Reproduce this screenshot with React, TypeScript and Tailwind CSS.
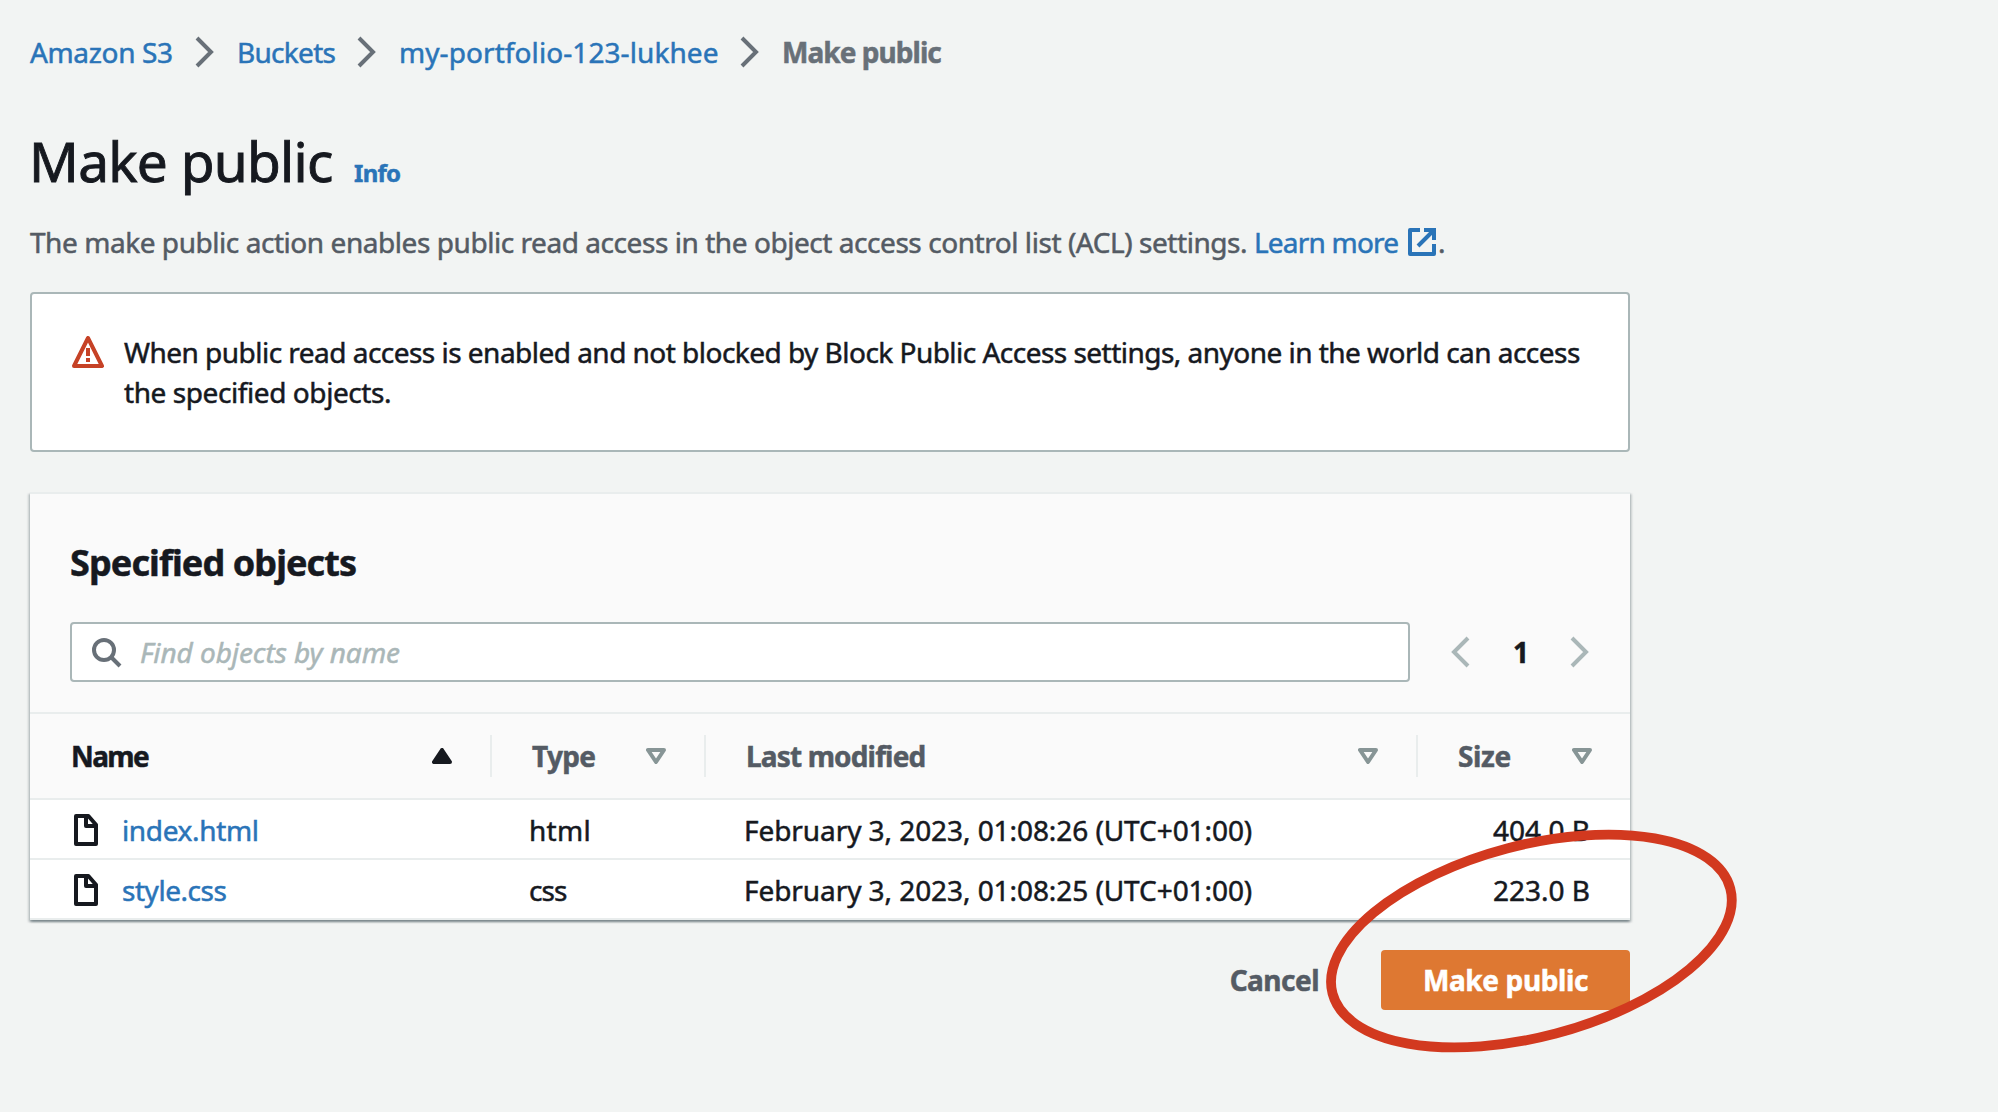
import type { ReactNode } from "react";

function Chevron({ flip = false, className = "" }: { flip?: boolean; className?: string }) {
  return (
    <svg viewBox="0 0 16 16" className={`size-8 shrink-0 ${className}`} fill="none" stroke="currentColor" strokeWidth="2">
      <path d={flip ? "M11 1 4 8l7 7" : "m4 1 7 7-7 7"} />
    </svg>
  );
}

function ExternalIcon() {
  return (
    <svg viewBox="0 0 16 16" className="size-8 shrink-0 text-[#2a74b8]" fill="none" stroke="currentColor" strokeWidth="2">
      <path d="M14 2 6 10M7 2H2v12h12V9" strokeLinejoin="round" />
      <path d="M9 2h5v5" />
    </svg>
  );
}

function WarningIcon() {
  return (
    <svg viewBox="0 0 16 16" className="mt-1 size-8 shrink-0 text-[#c64226]" fill="none" stroke="currentColor" strokeWidth="2">
      <path d="m8 1 7 14H1z" strokeLinejoin="round" />
      <path d="M8 6v4M8 11v2" />
    </svg>
  );
}

function SearchIcon() {
  return (
    <svg viewBox="0 0 16 16" className="size-8 shrink-0 text-[#687078]" fill="none" stroke="currentColor" strokeWidth="2">
      <circle cx="7" cy="7" r="5" />
      <path d="m15 15-4.5-4.5" />
    </svg>
  );
}

function FileIcon() {
  return (
    <svg viewBox="0 0 16 16" className="size-8 shrink-0 text-[#16191f]" fill="none" stroke="currentColor" strokeWidth="2" strokeLinejoin="round">
      <path d="M3 1h6.2L13 5.4V15H3z" />
      <path d="M8 1v5h5" />
    </svg>
  );
}

function SortIcon({ active = false }: { active?: boolean }) {
  return (
    <svg
      viewBox="0 0 20 16"
      className={`h-4 w-5 shrink-0 ${active ? "text-[#16191f]" : "text-[#879596]"}`}
      stroke="currentColor"
      strokeWidth="4"
      strokeLinejoin="round"
      fill={active ? "currentColor" : "none"}
    >
      <path d={active ? "M2 14h16L10 2z" : "M2 2h16l-8 12z"} />
    </svg>
  );
}

function HeaderCell({ children, active = false, divider = true, className = "" }: { children: ReactNode; active?: boolean; divider?: boolean; className?: string }) {
  return (
    <div className={`flex h-[42px] items-center justify-between font-bold ${divider ? "border-r-2 border-[#e9eded]" : ""} ${active ? "text-[#16191f]" : "text-[#545b64]"} ${className}`}>
      {children}
      <SortIcon active={active} />
    </div>
  );
}

const COLUMNS = "grid grid-cols-[462px_214px_712px_212px] items-center";

const FILES = [
  { name: "index.html", type: "html", modified: "February 3, 2023, 01:08:26 (UTC+01:00)", size: "404.0 B", nameSpacing: "tracking-[-0.35px]", typeSpacing: "tracking-[0.3px]" },
  { name: "style.css", type: "css", modified: "February 3, 2023, 01:08:25 (UTC+01:00)", size: "223.0 B", nameSpacing: "tracking-[-0.45px]", typeSpacing: "tracking-[-0.9px]" },
];

export default function App() {
  return (
    <div className="relative h-[1112px] w-[1998px] overflow-hidden bg-[#f2f4f3] pt-8 pl-[30px] font-['Noto_Sans',sans-serif] text-[28px] leading-10 whitespace-nowrap text-[#16191f] [-webkit-text-stroke:0.5px]">
      <div className="w-[1600px]">
        <nav className="flex h-10 items-center text-[#687078]">
          <a className="w-[159px] tracking-[-0.35px] text-[#2a74b8]">Amazon S3</a>
          <Chevron />
          <a className="ml-4 w-[114px] tracking-[-0.7px] text-[#2a74b8]">Buckets</a>
          <Chevron />
          <a className="ml-4 w-[335px] tracking-[0.08px] text-[#2a74b8]">my-portfolio-123-lukhee</a>
          <Chevron />
          <span className="ml-4 font-bold tracking-[-0.95px]">Make public</span>
        </nav>

        <header className="mt-[57px] flex h-16 items-baseline">
          <h1 className="-ml-px w-[325px] text-[55px] leading-16 tracking-[-0.75px] [-webkit-text-stroke:0.9px]">Make public</h1>
          <a className="text-2xl font-bold tracking-[-0.7px] text-[#2a74b8]">Info</a>
        </header>

        <p className="mt-[29px] flex h-10 items-center text-[#545b64]">
          <span className="w-[1224px] tracking-[-0.444px]">
            The make public action enables public read access in the object access control list (ACL) settings.
          </span>
          <a className="flex w-[184px] items-center justify-between text-[#2a74b8]">
            <span className="tracking-[-0.8px]">Learn more</span>
            <ExternalIcon />
          </a>
          <span>.</span>
        </p>

        <section className="mt-[30px] flex h-40 gap-5 rounded-sm border-2 border-[#aab7b8] bg-white pt-[38px] pl-10">
          <WarningIcon />
          <p>
            <span className="tracking-[-0.526px]">
              When public read access is enabled and not blocked by Block Public Access settings, anyone in the world can access
            </span>
            <br />
            <span className="tracking-[-0.42px]">the specified objects.</span>
          </p>
        </section>

        <section className="mt-10 border-t-2 border-[#e9eded] bg-[#fafafa] shadow-[0_2px_2px_0_rgba(0,28,36,0.3),2px_2px_2px_0_rgba(0,28,36,0.15),-2px_2px_2px_0_rgba(0,28,36,0.15)]">
          <div className="h-[218px] pt-[47px] pl-10">
            <h2 className="text-4xl leading-11 font-bold tracking-[-0.9px]">Specified objects</h2>
            <div className="mt-[37px] flex h-[60px] items-center">
              <div className="flex h-full w-[1340px] shrink-0 items-center gap-[18px] rounded-sm border-2 border-[#aab7b8] bg-white pl-[18px]">
                <SearchIcon />
                <span className="tracking-[-0.07px] text-[#aab7b8] italic">Find objects by name</span>
              </div>
              <Chevron flip className="ml-9 text-[#aab7b8]" />
              <span className="w-[86px] text-center font-bold">1</span>
              <Chevron className="text-[#aab7b8]" />
            </div>
          </div>

          <div className={`${COLUMNS} h-[88px] border-y-2 border-[#e9eded]`}>
            <HeaderCell active className="pr-[38px] pl-[41px]">
              <span className="tracking-[-1.6px]">Name</span>
            </HeaderCell>
            <HeaderCell className="pr-[38px] pl-10">
              <span className="tracking-[-0.7px]">Type</span>
            </HeaderCell>
            <HeaderCell className="pr-[38px] pl-10">
              <span className="tracking-[-0.85px]">Last modified</span>
            </HeaderCell>
            <HeaderCell divider={false} className="pr-[38px] pl-10">
              <span className="tracking-[-0.4px]">Size</span>
            </HeaderCell>
          </div>

          {FILES.map((file) => (
            <div key={file.name} className={`${COLUMNS} h-[60px] border-b-2 border-[#e9eded] bg-white pt-0.5`}>
              <div className="flex items-center gap-5 pl-10">
                <FileIcon />
                <a className={`text-[#2a74b8] ${file.nameSpacing}`}>{file.name}</a>
              </div>
              <span className={`pl-[37px] ${file.typeSpacing}`}>{file.type}</span>
              <span className="pl-[38px] tracking-[-0.07px]">{file.modified}</span>
              <span className="pr-10 text-right">{file.size}</span>
            </div>
          ))}
        </section>

        <footer className="mt-[30px] flex h-[60px] items-center justify-end font-bold">
          <button className="mr-[62px] tracking-[-0.52px] text-[#545b64]">Cancel</button>
          <button className="h-full w-[249px] rounded-sm bg-[#de7832] tracking-[-0.38px] text-white">Make public</button>
        </footer>
      </div>

      {/* Hand-placed highlight around the primary action */}
      <svg className="pointer-events-none absolute top-[820px] left-[1310px] h-[250px] w-[440px]" viewBox="1310 820 440 250" fill="none">
        <ellipse cx="1531.4" cy="941" rx="205.7" ry="95.7" transform="rotate(-14.8 1531.4 941)" stroke="#d2391f" strokeWidth="9.8" />
      </svg>
    </div>
  );
}
